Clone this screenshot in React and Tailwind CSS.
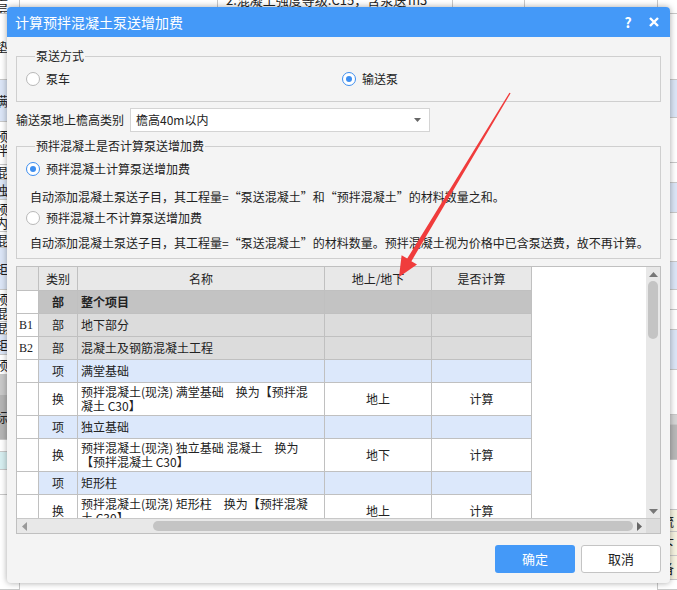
import React from 'react';

const font = { fontFamily: '"Noto Sans CJK SC", "Liberation Sans", sans-serif' };

const leftBands = [
  { h: 14, bg: 'bg-white', t: '垫层', top: true },
  { h: 66, bg: 'bg-white', t: '垫' },
  { h: 42, bg: 'bg-[#dbe5f6]', t: '满' },
  { h: 43, bg: 'bg-white', t: '预拌' },
  { h: 15, bg: 'bg-white', t: '混' },
  { h: 20, bg: 'bg-[#dbe5f6]', t: '独' },
  { h: 32, bg: 'bg-white', t: '预内' },
  { h: 16, bg: 'bg-white', t: '混' },
  { h: 42, bg: 'bg-[#dbe5f6]', t: '矩' },
  { h: 32, bg: 'bg-white', t: '预混' },
  { h: 13, bg: 'bg-white', t: '混' },
  { h: 20, bg: 'bg-[#dbe5f6]', t: '矩' },
  { h: 20, bg: 'bg-white', t: '预' },
  { h: 20, bg: 'bg-[#c8c8c8]', t: '' },
  { h: 45, bg: 'bg-[#b4b4b4]', t: '标' },
  { h: 12, bg: 'bg-white', t: '' },
  { h: 18, bg: 'bg-[#d6eef0]', t: '' },
  { h: 25, bg: 'bg-white', t: '' },
  { h: 95, bg: 'bg-white', t: '' },
];

const rightBands = [
  { h: 14, bg: 'bg-white', t: '' },
  { h: 66, bg: 'bg-white', t: '' },
  { h: 38, bg: 'bg-[#dbe5f6]', t: '' },
  { h: 45, bg: 'bg-white', t: '' },
  { h: 20, bg: 'bg-white', t: '' },
  { h: 30, bg: 'bg-[#dbe5f6]', t: '' },
  { h: 27, bg: 'bg-white', t: '' },
  { h: 22, bg: 'bg-white', t: '' },
  { h: 28, bg: 'bg-[#dbe5f6]', t: '' },
  { h: 20, bg: 'bg-white', t: '' },
  { h: 20, bg: 'bg-white', t: '' },
  { h: 40, bg: 'bg-[#dbe5f6]', t: '' },
  { h: 45, bg: 'bg-white', t: '' },
  { h: 10, bg: 'bg-[#d4d4d4]', t: '' },
  { h: 35, bg: 'bg-[#b8b8b8]', t: '' },
  { h: 50, bg: 'bg-white', t: '' },
  { h: 22, bg: 'bg-[#f6f3e0]', t: '流' },
  { h: 24, bg: 'bg-[#f6f3e0]', t: '下' },
  { h: 24, bg: 'bg-[#f6f3e0]', t: '备' },
  { h: 10, bg: 'bg-white', t: '' },
];

const rows = [
  { no: '', type: '部', name: ['整个项目'], kind: 'root' },
  { no: 'B1', type: '部', name: ['地下部分'], kind: 'part' },
  { no: 'B2', type: '部', name: ['混凝土及钢筋混凝土工程'], kind: 'part' },
  { no: '', type: '项', name: ['满堂基础'], kind: 'item' },
  { no: '', type: '换', name: ['预拌混凝土(现浇) 满堂基础　换为【预拌混', '凝土 C30】'], pos: '地上', calc: '计算', kind: 'sub' },
  { no: '', type: '项', name: ['独立基础'], kind: 'item' },
  { no: '', type: '换', name: ['预拌混凝土(现浇) 独立基础 混凝土　换为', '【预拌混凝土 C30】'], pos: '地下', calc: '计算', kind: 'sub' },
  { no: '', type: '项', name: ['矩形柱'], kind: 'item' },
  { no: '', type: '换', name: ['预拌混凝土(现浇) 矩形柱　换为【预拌混凝', '土 C30】'], pos: '地上', calc: '计算', kind: 'sub' },
];

const rowBg = {
  root: 'bg-[#c3c3c3]',
  part: 'bg-[#dcdcdc]',
  item: 'bg-[#dce8fb]',
  sub: 'bg-white',
};

function Radio({ checked, label }) {
  return (
    <div className="flex items-center gap-[6px] h-[14px]">
      <span
        className={`w-[14px] h-[14px] rounded-full border bg-white flex items-center justify-center ${
          checked ? 'border-[#3d8ef0]' : 'border-[#b8b8b8]'
        }`}
      >
        {checked && <span className="w-[6px] h-[6px] rounded-full bg-[#3d8ef0]" />}
      </span>
      <span className="leading-[14px]">{label}</span>
    </div>
  );
}

function Band({ b, side }) {
  return (
    <div
      className={`${b.bg} border-b border-[#c8c8c8] flex items-center overflow-hidden text-[13px] text-[#222] leading-[14px] shrink-0`}
      style={{ height: b.h }}
    >
      {b.t && (
        <span className={`${side === 'left' ? 'ml-[-5px]' : 'ml-[3px]'} ${b.top ? 'mt-[-10px]' : ''} whitespace-pre-wrap w-[13px]`}>
          {b.t}
        </span>
      )}
    </div>
  );
}

function TableRow({ r }) {
  const bg = rowBg[r.kind];
  const tall = r.kind === 'sub';
  const h = tall ? 'h-[33px]' : 'h-[23px]';
  const bold = r.kind === 'root' ? 'font-bold' : '';
  return (
    <div className={`flex shrink-0 ${h}`}>
      <div
        className="w-[22px] shrink-0 bg-white border-r border-b border-[#c0c0c0] flex items-center pl-[2px] text-[12px]"
        style={{ fontFamily: '"Liberation Serif", serif' }}
      >
        {r.no}
      </div>
      <div className={`w-[39px] shrink-0 ${bg} ${bold} border-r border-b border-[#c0c0c0] flex items-center justify-center`}>
        {r.type}
      </div>
      <div className={`w-[247px] shrink-0 ${bg} ${bold} border-r border-b border-[#c0c0c0] flex flex-col justify-center pl-[3px] whitespace-nowrap overflow-hidden leading-[14px]`}>
        {r.name.map((n, i) => (
          <span key={i}>{n}</span>
        ))}
      </div>
      <div className={`w-[107px] shrink-0 ${bg} border-r border-b border-[#c0c0c0] flex items-center justify-center`}>
        {r.pos}
      </div>
      <div className={`w-[100px] shrink-0 ${bg} border-r border-b border-[#c0c0c0] flex items-center justify-center`}>
        {r.calc}
      </div>
    </div>
  );
}

export default function App() {
  return (
    <div className="relative w-[677px] h-[590px] overflow-hidden bg-white text-[#222]" style={font}>
      {/* spreadsheet behind the dialog */}
      <div className="flex w-full h-full">
        <div className="w-[20px] flex flex-col border-r border-[#c8c8c8]">
          {leftBands.map((b, i) => (
            <Band key={i} b={b} side="left" />
          ))}
        </div>
        <div className="flex-1 flex flex-col">
          <div className="h-[14px] flex border-b border-[#c8c8c8] text-[13px] leading-[14px] overflow-hidden">
            <div className="w-[198px] border-r border-[#c8c8c8]" />
            <div className="w-[186px] border-r border-[#c8c8c8] pl-[8px] mt-[-7px] whitespace-nowrap">2.混凝土强度等级:C15，含泵送</div>
            <div className="w-[49px] border-r border-[#c8c8c8] pl-[4px] mt-[-7px]">m3</div>
            <div className="w-[72px] border-r border-[#c8c8c8]" />
            <div className="flex-1" />
          </div>
        </div>
        <div className="w-[20px] flex flex-col border-l border-[#c8c8c8]">
          {rightBands.map((b, i) => (
            <Band key={i} b={b} side="right" />
          ))}
        </div>
      </div>

      {/* dialog window */}
      <div className="absolute left-[7px] top-[7px] w-[663px] h-[576px] bg-[#f4f4f4] rounded-[4px] shadow-[0_0_6px_rgba(0,0,0,0.35)] flex flex-col overflow-hidden text-[12px]">
        <div className="h-[30px] bg-[#4499f8] flex items-center pl-[8px] pr-[8px] text-white shrink-0">
          <span className="text-[14px] flex-1">计算预拌混凝土泵送增加费</span>
          <span className="text-[14px] font-bold w-[14px] text-center mr-[13px]">?</span>
          <svg width="12" height="12" viewBox="0 0 12 12" className="mr-[2px]">
            <path d="M2 2 L10 10 M10 2 L2 10" stroke="white" strokeWidth="2.4" />
          </svg>
        </div>

        <div className="flex flex-col px-[9px]">
          <fieldset className="mt-[12px] border border-[#cfcfcf] pl-[9px] pt-[9px] pb-[15px]">
            <legend className="ml-[9px] px-[1px] text-[12px] leading-[14px]">泵送方式</legend>
            <div className="flex">
              <div className="w-[316px]">
                <Radio label="泵车" />
              </div>
              <Radio checked label="输送泵" />
            </div>
          </fieldset>

          <div className="flex items-center mt-[6px] h-[24px]">
            <span className="w-[114px]">输送泵地上檐高类别</span>
            <div className="w-[300px] h-[24px] bg-white border border-[#d4d4d4] flex items-center pl-[5px] pr-[8px]">
              <span className="flex-1">檐高40m以内</span>
              <svg width="7" height="4" viewBox="0 0 7 4">
                <path d="M0 0 L7 0 L3.5 4 Z" fill="#666" />
              </svg>
            </div>
          </div>

          <fieldset className="mt-[7px] border border-[#cfcfcf] pl-[9px] pt-[9px] pb-[7px]">
            <legend className="ml-[9px] px-[1px] text-[12px] leading-[14px]">预拌混凝土是否计算泵送增加费</legend>
            <Radio checked label="预拌混凝土计算泵送增加费" />
            <div className="mt-[13px] ml-[4px] leading-[16px] whitespace-nowrap">
              自动添加混凝土泵送子目，其工程量=“泵送混凝土”和“预拌混凝土”的材料数量之和。
            </div>
            <div className="mt-[6px]">
              <Radio label="预拌混凝土不计算泵送增加费" />
            </div>
            <div className="mt-[10px] ml-[4px] leading-[16px] whitespace-nowrap">
              自动添加混凝土泵送子目，其工程量=“泵送混凝土”的材料数量。预拌混凝土视为价格中已含泵送费，故不再计算。
            </div>
          </fieldset>

          <div className="mt-[7px] h-[268px] border border-[#c0c0c0] bg-white flex flex-col">
            <div className="flex flex-1 min-h-0">
              <div className="flex-1 overflow-hidden flex flex-col">
                <div className="flex h-[24px] shrink-0">
                  <div className="w-[22px] shrink-0 bg-[#e8e8e8] border-r border-b border-[#c0c0c0]" />
                  <div className="w-[39px] shrink-0 bg-[#e8e8e8] border-r border-b border-[#c0c0c0] flex items-center justify-center">类别</div>
                  <div className="w-[247px] shrink-0 bg-[#e8e8e8] border-r border-b border-[#c0c0c0] flex items-center justify-center">名称</div>
                  <div className="w-[107px] shrink-0 bg-[#e8e8e8] border-r border-b border-[#c0c0c0] flex items-center justify-center">地上/地下</div>
                  <div className="w-[100px] shrink-0 bg-[#e8e8e8] border-r border-b border-[#c0c0c0] flex items-center justify-center">是否计算</div>
                </div>
                {rows.map((r, i) => (
                  <TableRow key={i} r={r} />
                ))}
              </div>
              <div className="w-[14px] shrink-0 bg-[#e8e8e8] flex flex-col items-center">
                <svg width="9" height="5" viewBox="0 0 9 5" className="mt-[5px]">
                  <path d="M0 5 L9 5 L4.5 0 Z" fill="#777" />
                </svg>
                <div className="w-[10px] h-[58px] mt-[4px] rounded-full bg-[#c4c4c4]" />
                <div className="flex-1" />
                <svg width="9" height="5" viewBox="0 0 9 5" className="mb-[4px]">
                  <path d="M0 0 L9 0 L4.5 5 Z" fill="#777" />
                </svg>
              </div>
            </div>
            <div className="h-[15px] shrink-0 flex border-t border-[#c8c8c8] bg-[#e8e8e8]">
              <div className="flex-1 flex items-center">
                <svg width="5" height="9" viewBox="0 0 5 9" className="ml-[5px]">
                  <path d="M5 0 L5 9 L0 4.5 Z" fill="#999" />
                </svg>
                <div className="ml-[126px] w-[480px] h-[10px] rounded-full bg-[#c4c4c4]" />
                <svg width="5" height="9" viewBox="0 0 5 9" className="ml-[4px]">
                  <path d="M0 0 L0 9 L5 4.5 Z" fill="#666" />
                </svg>
              </div>
              <div className="w-[14px] bg-[#dcdcdc]" />
            </div>
          </div>

          <div className="flex justify-end gap-[6px] mt-[11px]">
            <button className="w-[80px] h-[28px] rounded-[3px] bg-[#4499f8] text-white text-[13px]">确定</button>
            <button className="w-[80px] h-[28px] rounded-[3px] bg-white border border-[#c4c4c4] text-[13px]">取消</button>
          </div>
        </div>
      </div>

      {/* red annotation arrow */}
      <svg className="absolute left-0 top-0 pointer-events-none" width="677" height="590" viewBox="0 0 677 590">
        <polygon
          points="510.6,93.3 509.4,92.7 407.2,258.6 401.6,255.3 399,277 417,264.5 411.4,261.2"
          fill="#f03c3c"
        />
      </svg>
    </div>
  );
}
